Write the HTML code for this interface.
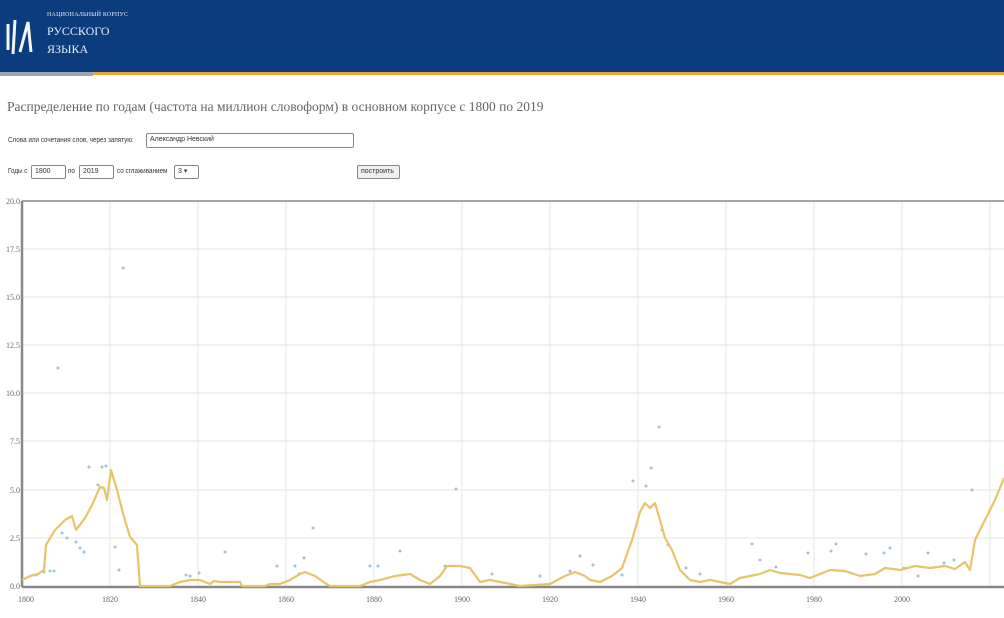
<!DOCTYPE html>
<html><head><meta charset="utf-8"><style>
body{margin:0;width:1004px;height:618px;overflow:hidden;background:#fff;font-family:"Liberation Serif",serif;position:relative}
.hdr{position:absolute;left:0;top:0;width:1004px;height:72px;background:#0b3c7e}
.or{position:absolute;left:93px;top:72px;width:911px;height:3px;background:#e8a33a}
.gr{position:absolute;left:0;top:72px;width:93px;height:4px;background:#9aa6b8}
.t{position:absolute;color:#e6ecf4}
.title{position:absolute;left:7px;top:99px;font-size:13.5px;color:#666;white-space:nowrap}
.sm{position:absolute;font-size:7px;color:#333;font-family:"Liberation Sans",sans-serif;white-space:nowrap;transform-origin:0 0;transform:scaleX(0.9)}
.inp{position:absolute;border:1px solid #888;border-radius:2px;background:#fff;font-size:7px;font-family:"Liberation Sans",sans-serif;color:#333;padding-left:3px;box-sizing:border-box;line-height:12px;white-space:nowrap;overflow:hidden}
</style></head><body>
<div class="hdr"></div><div class="or"></div><div class="gr"></div>
<svg style="position:absolute;left:4px;top:14px" width="32" height="44"><path d="M4 10 L4 36 M11 6 L9 40 M16 38 L24 8 L27 38" stroke="#f2f4f8" stroke-width="3" fill="none"/></svg>
<div class="t" style="left:47px;top:12px;font-size:6px;letter-spacing:0.2px">НАЦИОНАЛЬНЫЙ КОРПУС</div>
<div class="t" style="left:47px;top:24px;font-size:12px">РУССКОГО</div>
<div class="t" style="left:47px;top:42px;font-size:12px">ЯЗЫКА</div>
<div class="title">Распределение по годам (частота на миллион словоформ) в основном корпусе с 1800 по 2019</div>
<div class="sm" style="left:8px;top:137px">Слова или сочетания слов, через запятую:</div>
<div class="inp" style="left:146px;top:133px;width:208px;height:15px">Александр Невский</div>
<div class="sm" style="left:8px;top:168px">Годы с</div>
<div class="inp" style="left:31px;top:165px;width:35px;height:14px">1800</div>
<div class="sm" style="left:68px;top:168px">по</div>
<div class="inp" style="left:79px;top:165px;width:35px;height:14px">2019</div>
<div class="sm" style="left:117px;top:168px">со сглаживанием</div>
<div class="inp" style="left:174px;top:165px;width:25px;height:14px">3 ▾</div>
<div class="inp" style="left:357px;top:165px;width:43px;height:14px;background:#f0f0f0">построить</div>
<svg style="position:absolute;left:0;top:195px" width="1004" height="423" viewBox="0 195 1004 423">
<g stroke="#e6e6e6" stroke-width="1">
<line x1="22" x2="1004" y1="249" y2="249"/><line x1="22" x2="1004" y1="297" y2="297"/><line x1="22" x2="1004" y1="345" y2="345"/><line x1="22" x2="1004" y1="393" y2="393"/><line x1="22" x2="1004" y1="441" y2="441"/><line x1="22" x2="1004" y1="490" y2="490"/><line x1="22" x2="1004" y1="538" y2="538"/>
<line x1="110" x2="110" y1="201" y2="586"/><line x1="198" x2="198" y1="201" y2="586"/><line x1="286" x2="286" y1="201" y2="586"/><line x1="374" x2="374" y1="201" y2="586"/><line x1="462" x2="462" y1="201" y2="586"/><line x1="550" x2="550" y1="201" y2="586"/><line x1="638" x2="638" y1="201" y2="586"/><line x1="726" x2="726" y1="201" y2="586"/><line x1="814" x2="814" y1="201" y2="586"/><line x1="902" x2="902" y1="201" y2="586"/><line x1="990" x2="990" y1="201" y2="586"/>
</g>
<line x1="22" x2="1004" y1="201" y2="201" stroke="#888" stroke-width="1.5"/>
<line x1="22" x2="22" y1="201" y2="587" stroke="#888" stroke-width="2.5"/>
<line x1="22" x2="1004" y1="587" y2="587" stroke="#888" stroke-width="2.5"/>
<g font-family="Liberation Serif" font-size="8" fill="#666" text-anchor="end">
<text x="20" y="204">20.0</text><text x="20" y="252">17.5</text><text x="20" y="300">15.0</text><text x="20" y="348">12.5</text><text x="20" y="396">10.0</text><text x="20" y="444">7.5</text><text x="20" y="493">5.0</text><text x="20" y="541">2.5</text><text x="20" y="589">0.0</text>
</g>
<g font-family="Liberation Serif" font-size="8" fill="#666" text-anchor="middle">
<text x="26" y="602">1800</text><text x="110" y="602">1820</text><text x="198" y="602">1840</text><text x="286" y="602">1860</text><text x="374" y="602">1880</text><text x="462" y="602">1900</text><text x="550" y="602">1920</text><text x="638" y="602">1940</text><text x="726" y="602">1960</text><text x="814" y="602">1980</text><text x="902" y="602">2000</text>
</g>
<g fill="#9cc4e0">
<circle cx="58" cy="368" r="1.5"/><circle cx="123" cy="268" r="1.5"/><circle cx="89" cy="467" r="1.5"/><circle cx="102" cy="467" r="1.5"/><circle cx="106" cy="466" r="1.5"/><circle cx="98" cy="485" r="1.5"/><circle cx="62" cy="533" r="1.5"/><circle cx="67" cy="538" r="1.5"/><circle cx="76" cy="542" r="1.5"/><circle cx="80" cy="548" r="1.5"/><circle cx="84" cy="552" r="1.5"/><circle cx="115" cy="547" r="1.5"/><circle cx="119" cy="570" r="1.5"/><circle cx="44" cy="572" r="1.5"/><circle cx="50" cy="571" r="1.5"/><circle cx="54" cy="571" r="1.5"/><circle cx="36" cy="575" r="1.5"/>
<circle cx="225" cy="552" r="1.5"/><circle cx="199" cy="573" r="1.5"/><circle cx="186" cy="575" r="1.5"/><circle cx="190" cy="576" r="1.5"/><circle cx="277" cy="566" r="1.5"/><circle cx="295" cy="566" r="1.5"/><circle cx="304" cy="558" r="1.5"/><circle cx="313" cy="528" r="1.5"/><circle cx="299" cy="574" r="1.5"/>
<circle cx="456" cy="489" r="1.5"/><circle cx="400" cy="551" r="1.5"/><circle cx="370" cy="566" r="1.5"/><circle cx="378" cy="566" r="1.5"/><circle cx="445" cy="566" r="1.5"/><circle cx="492" cy="574" r="1.5"/><circle cx="540" cy="576" r="1.5"/><circle cx="580" cy="556" r="1.5"/><circle cx="593" cy="565" r="1.5"/><circle cx="570" cy="571" r="1.5"/>
<circle cx="659" cy="427" r="1.5"/><circle cx="633" cy="481" r="1.5"/><circle cx="651" cy="468" r="1.5"/><circle cx="646" cy="486" r="1.5"/><circle cx="662" cy="530" r="1.5"/><circle cx="668" cy="545" r="1.5"/><circle cx="622" cy="575" r="1.5"/><circle cx="686" cy="568" r="1.5"/><circle cx="700" cy="574" r="1.5"/>
<circle cx="752" cy="544" r="1.5"/><circle cx="760" cy="560" r="1.5"/><circle cx="776" cy="567" r="1.5"/><circle cx="808" cy="553" r="1.5"/><circle cx="831" cy="551" r="1.5"/><circle cx="836" cy="544" r="1.5"/><circle cx="866" cy="554" r="1.5"/><circle cx="884" cy="553" r="1.5"/><circle cx="890" cy="548" r="1.5"/><circle cx="904" cy="568" r="1.5"/><circle cx="928" cy="553" r="1.5"/><circle cx="918" cy="576" r="1.5"/><circle cx="944" cy="563" r="1.5"/><circle cx="954" cy="560" r="1.5"/><circle cx="972" cy="490" r="1.5"/>
</g>
<polyline fill="none" stroke="#e6c46a" stroke-width="2.2" stroke-linejoin="round" points="22,580 30,576 38,574 44,570 46,545 55,530 65,520 72,516 76,530 85,518 92,505 100,487 104,488 107,500 111,470 117,490 124,517 130,537 137,545 140,586 170,586 180,582 190,580 200,580 210,584 214,581 220,582 240,582 242,586 265,586 270,584 280,584 290,580 300,574 305,572 315,576 325,583 330,586 360,586 370,582 380,580 395,576 410,574 420,580 430,584 440,576 447,566 460,566 470,568 480,582 490,580 500,582 510,584 520,586 550,584 565,576 575,572 585,576 590,580 600,582 612,576 622,568 632,540 640,512 645,503 650,508 655,503 660,520 665,538 672,550 680,570 690,580 700,582 710,580 720,582 730,584 740,578 760,574 770,570 780,573 800,575 810,578 820,574 830,570 845,571 860,576 875,574 885,568 900,570 915,566 930,568 945,566 955,569 965,562 970,570 975,540 985,520 995,500 1004,478"/>
</svg>
</body></html>
